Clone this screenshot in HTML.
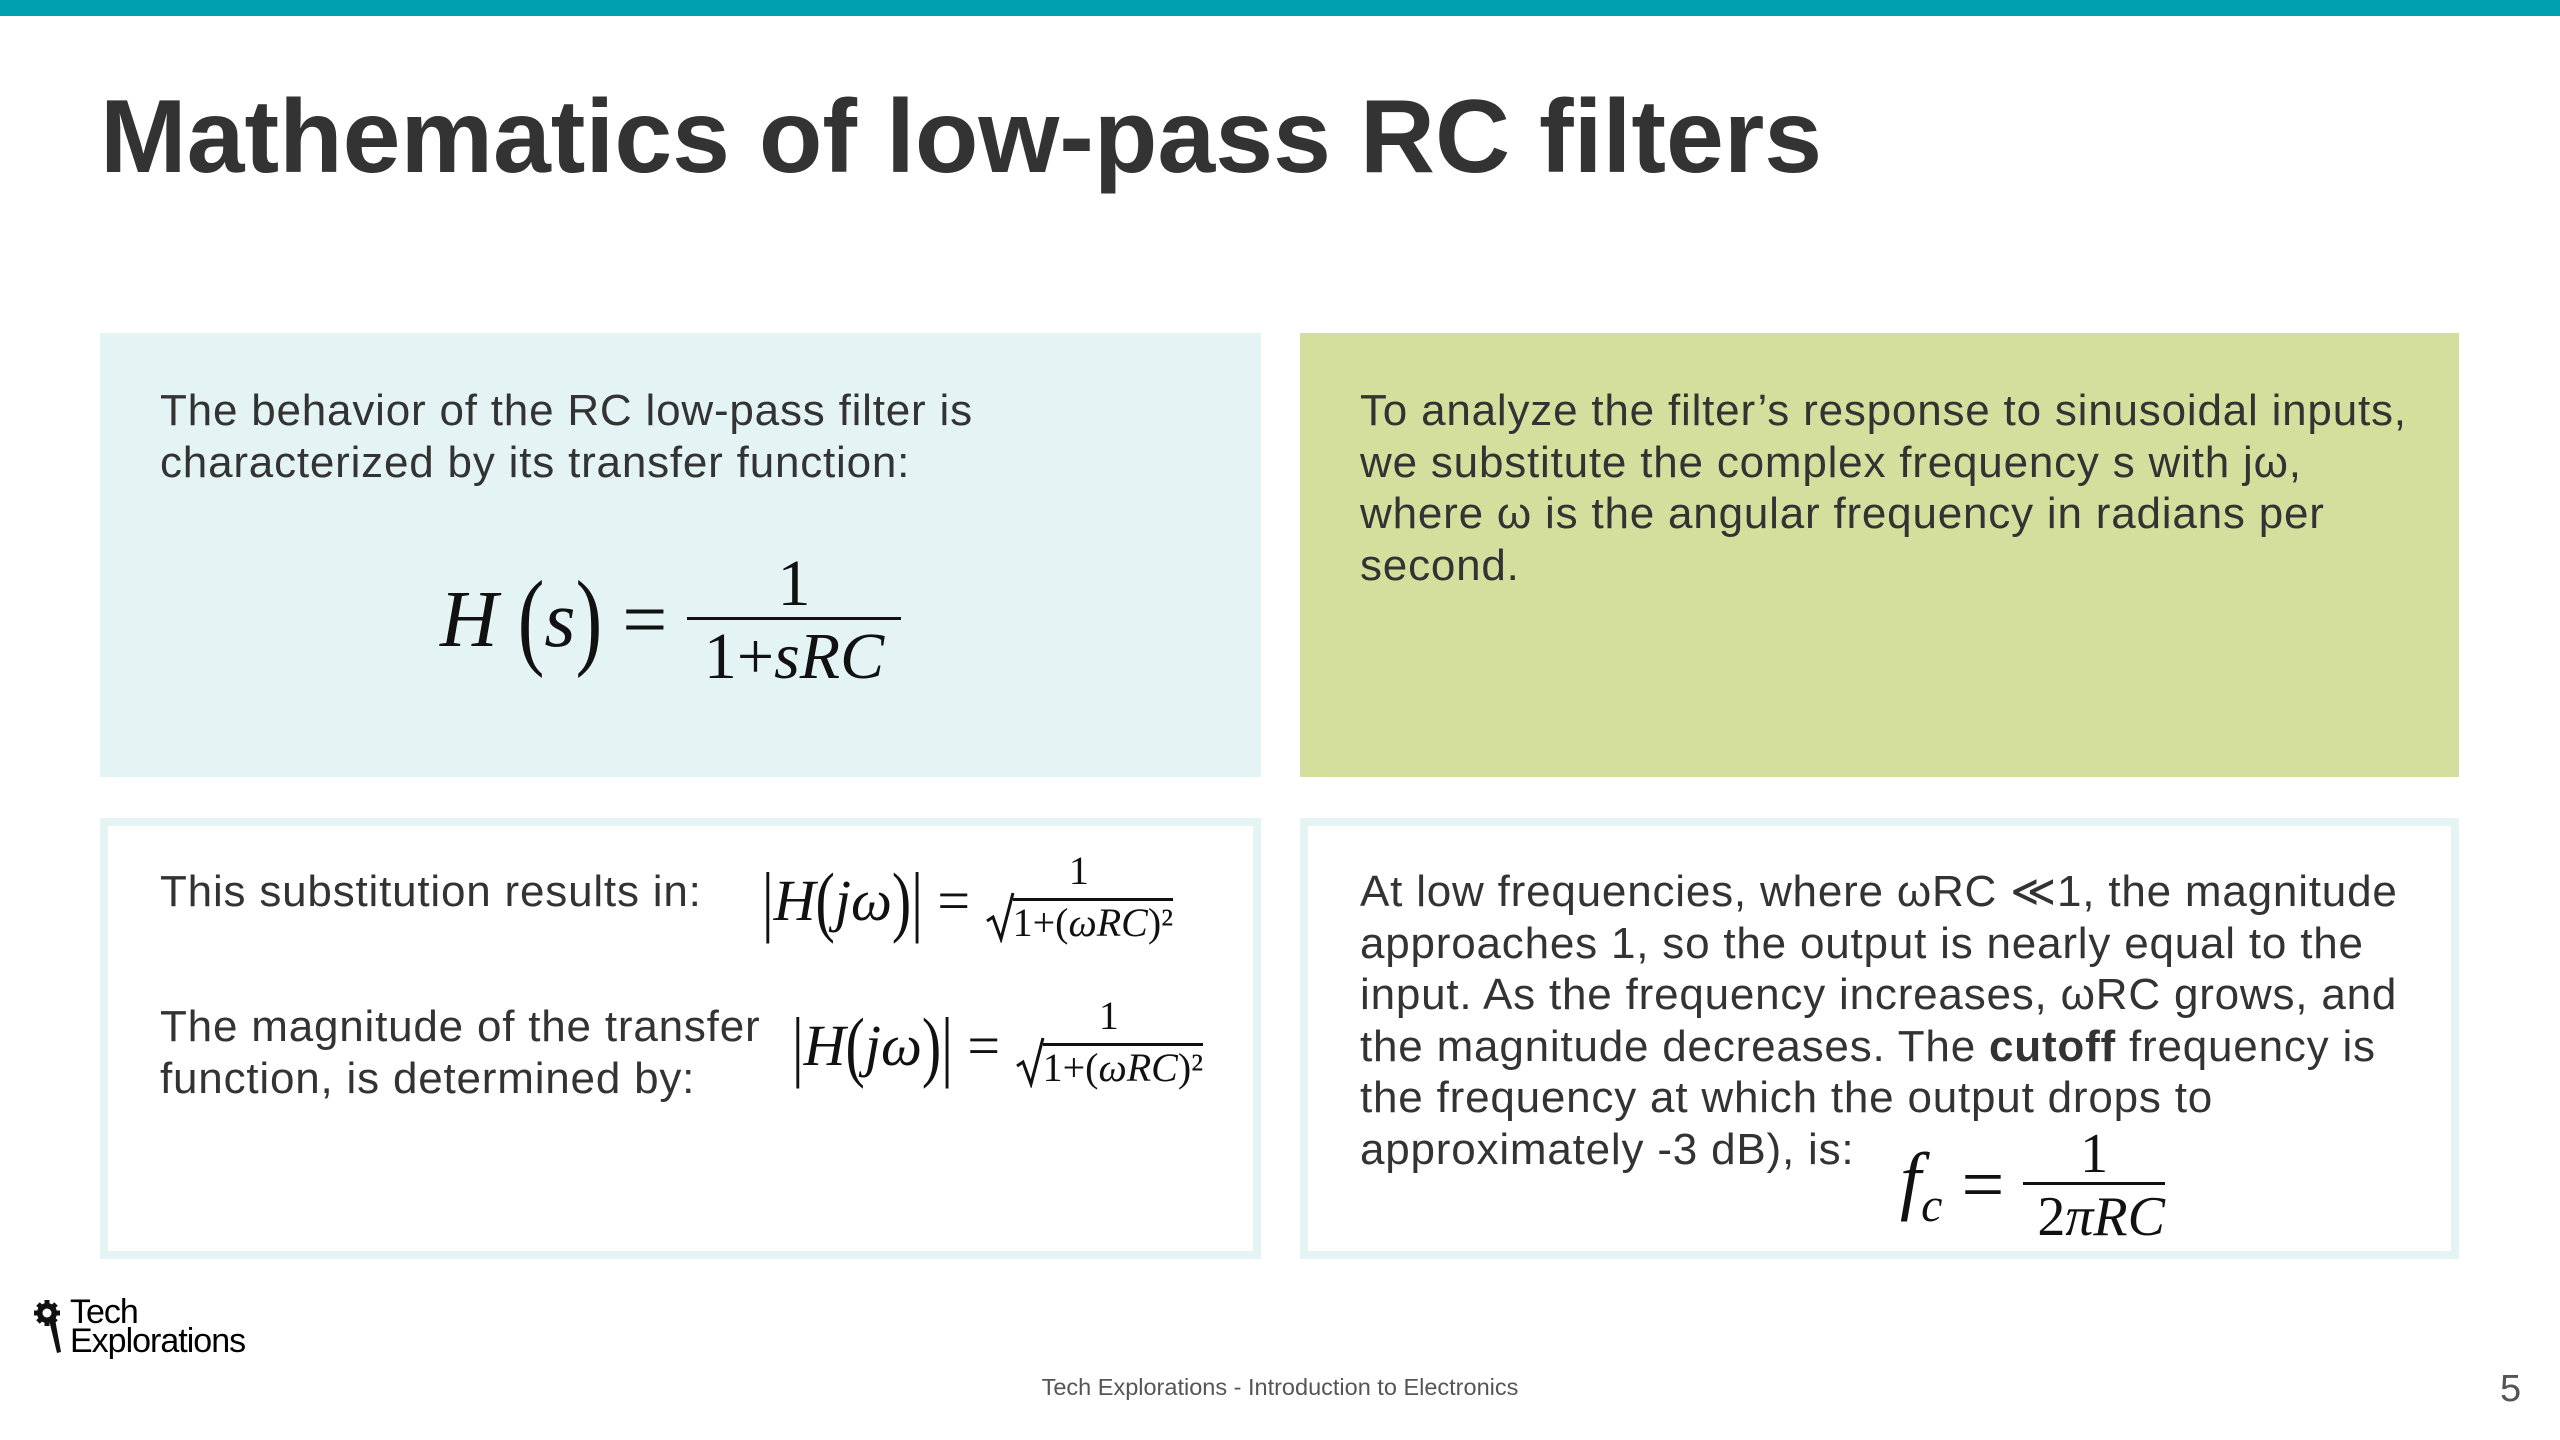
<!DOCTYPE html>
<html><head><meta charset="utf-8"><style>
*{margin:0;padding:0;box-sizing:border-box}
body{width:2560px;height:1440px;background:#fff;position:relative;overflow:hidden;font-family:"Liberation Sans",sans-serif;color:#333}
.bar{position:absolute;left:0;top:0;width:2560px;height:16px;background:#00a0b0}
h1{position:absolute;left:100px;top:78px;font-size:104px;font-weight:bold;color:#333;letter-spacing:0px;white-space:nowrap}
.box{position:absolute}
.t{position:absolute;font-size:44px;letter-spacing:0.8px;line-height:51.5px;color:#333;white-space:nowrap}
.m{position:absolute;font-family:"Liberation Serif",serif;color:#111;white-space:nowrap}
.i{font-style:italic}
.fr{display:inline-flex;flex-direction:column;align-items:center;vertical-align:middle}
.fr .n{line-height:1}
.fr .d{border-top:3px solid #111;line-height:1;padding-top:4px}
.p{display:inline-block;transform:scaleY(1.35)}
.sq{display:inline-flex;align-items:flex-end}
.sq svg{margin-right:-2px}
</style></head><body>
<div class="bar"></div>
<h1>Mathematics of low-pass RC filters</h1>

<div class="box" style="left:100px;top:333px;width:1161px;height:444px;background:#e4f4f4"></div>
<div class="box" style="left:1300px;top:333px;width:1159px;height:444px;background:#d4df9e"></div>
<div class="box" style="left:100px;top:818px;width:1161px;height:441px;border:8px solid #e4f4f4"></div>
<div class="box" style="left:1300px;top:818px;width:1159px;height:441px;border:8px solid #e4f4f4"></div>

<div class="t" style="left:160px;top:385px">The behavior of the RC low-pass filter is<br>characterized by its transfer function:</div>
<div class="m" style="left:440px;top:555px;font-size:80px;height:130px;display:flex;align-items:center">
<span class="i">H</span><span class="p">&nbsp;(</span><span class="i">s</span><span class="p">)</span><span>&nbsp;=&nbsp;</span>
<span class="fr" style="font-size:66px"><span class="n">1</span><span class="d">&nbsp;1+<span class="i">sRC</span>&nbsp;</span></span></div>

<div class="t" style="left:160px;top:866px">This substitution results in:</div>
<div class="m" style="left:762px;top:845px;font-size:58px;height:110px;display:flex;align-items:center">
<span class="p">|</span><span class="i">H</span><span class="p">(</span><span class="i">jω</span><span class="p">)|</span><span>&nbsp;=&nbsp;</span>
<span class="fr" style="font-size:40px"><span class="n">1</span><span class="d" style="border-top:none;padding-top:0"><span class="sq"><svg width="30" height="52" viewBox="0 0 30 52"><path d="M2 30 L8 26 L16 48 L28 2" fill="none" stroke="#111" stroke-width="3"/></svg><span style="border-top:3px solid #111;padding-top:2px">1+(<span class="i">ωRC</span>)²</span></span></span></span></div>

<div class="t" style="left:160px;top:1001px">The magnitude of the transfer<br>function, is determined by:</div>
<div class="m" style="left:792px;top:990px;font-size:58px;height:110px;display:flex;align-items:center">
<span class="p">|</span><span class="i">H</span><span class="p">(</span><span class="i">jω</span><span class="p">)|</span><span>&nbsp;=&nbsp;</span>
<span class="fr" style="font-size:40px"><span class="n">1</span><span class="d" style="border-top:none;padding-top:0"><span class="sq"><svg width="30" height="52" viewBox="0 0 30 52"><path d="M2 30 L8 26 L16 48 L28 2" fill="none" stroke="#111" stroke-width="3"/></svg><span style="border-top:3px solid #111;padding-top:2px">1+(<span class="i">ωRC</span>)²</span></span></span></span></div>

<div class="t" style="left:1360px;top:385px">To analyze the filter’s response to sinusoidal inputs,<br>we substitute the complex frequency s with jω,<br>where ω is the angular frequency in radians per<br>second.</div>

<div class="t" style="left:1360px;top:866px">At low frequencies, where ωRC ≪1, the magnitude<br>approaches 1, so the output is nearly equal to the<br>input. As the frequency increases, ωRC grows, and<br>the magnitude decreases. The <b>cutoff</b> frequency is<br>the frequency at which the output drops to<br>approximately -3 dB), is:</div>
<div class="m" style="left:1900px;top:1130px;font-size:76px;height:110px;display:flex;align-items:center">
<span class="i">f<sub style="font-size:48px">c</sub></span><span>&nbsp;=&nbsp;</span>
<span class="fr" style="font-size:56px"><span class="n">1</span><span class="d">&nbsp;2<span class="i">πRC</span></span></span></div>

<svg style="position:absolute;left:33px;top:1300px" width="40" height="56" viewBox="0 0 40 56">
<g fill="#111"><circle cx="14" cy="13" r="10"/>
<g stroke="#111" stroke-width="5"><line x1="14" y1="0" x2="14" y2="26"/><line x1="1" y1="13" x2="27" y2="13"/><line x1="5" y1="4" x2="23" y2="22"/><line x1="23" y1="4" x2="5" y2="22"/></g>
<circle cx="14" cy="13" r="4.5" fill="#fff"/>
<polygon points="16,20 22,19 28,52 24,53"/></g></svg>
<div style="position:absolute;left:70px;top:1298px;font-size:34px;line-height:29px;color:#000;letter-spacing:-1px">Tech<br>Explorations</div>

<div style="position:absolute;left:0;width:2560px;top:1374px;text-align:center;font-size:23.5px;color:#555">Tech Explorations - Introduction to Electronics</div>
<div style="position:absolute;left:2500px;top:1368px;font-size:38px;color:#555">5</div>
</body></html>
